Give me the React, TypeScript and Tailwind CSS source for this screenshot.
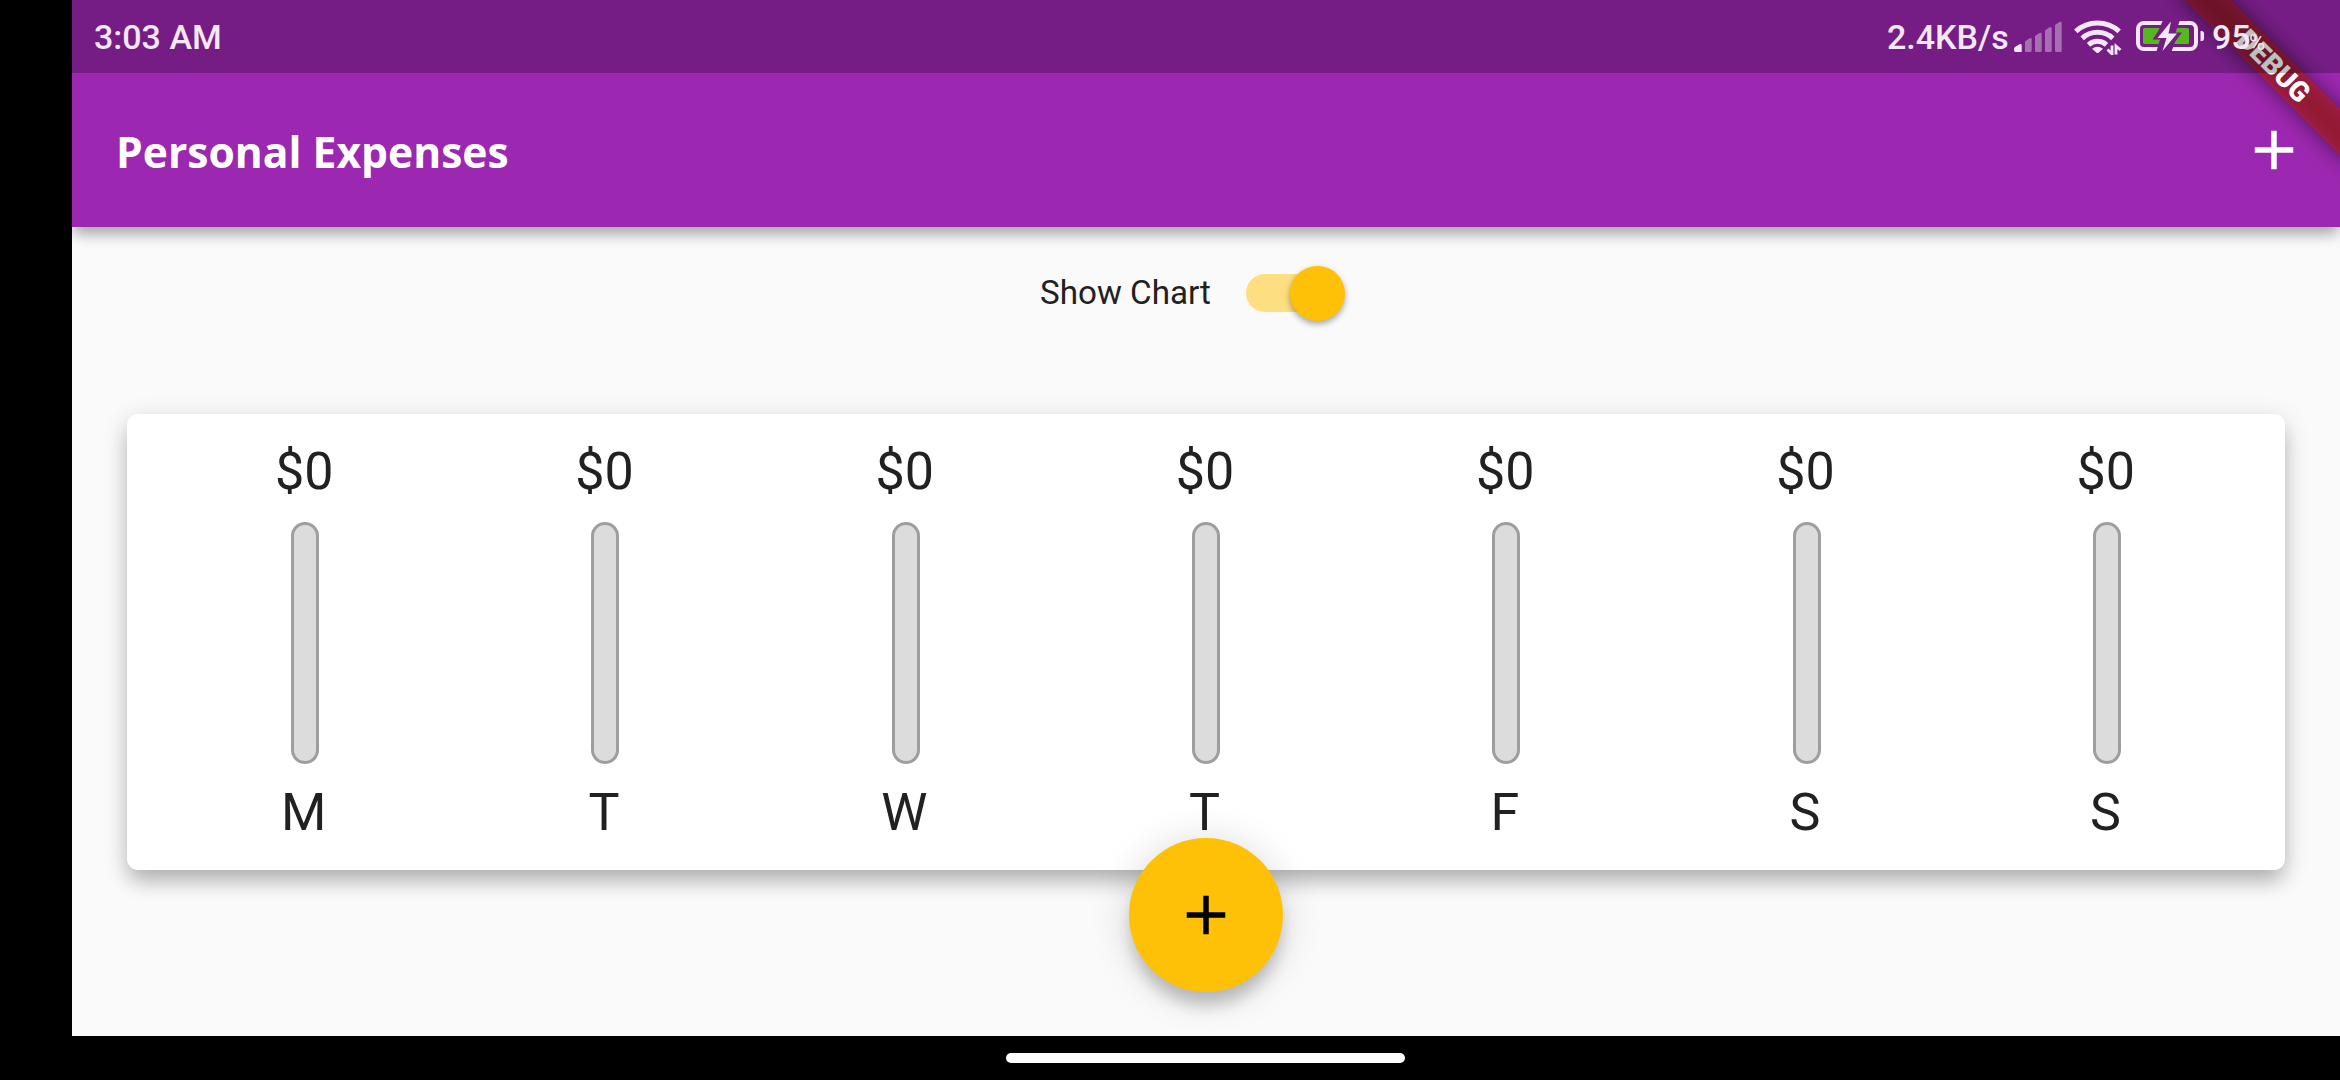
const days = ["M", "T", "W", "T", "F", "S", "S"];

function Plus({ size, color }: { size: number; color: string }) {
  return (
    <svg width={size} height={size} viewBox="0 0 24 24" fill={color}>
      <path d="M19 13h-6v6h-2v-6H5v-2h6V5h2v6h6v2z" />
    </svg>
  );
}

function Signal() {
  return (
    <svg width="48" height="32" viewBox="0 0 48 32" fill="#f3e8f5">
      <path d="M0 29V27.500Q0 26.500 1 26L5.500 23.200Q7.700 22.500 7.700 24.500V31H1.500Q0 31 0 29Z" />
      <g opacity="0.4">
        <path d="M11 20.500L15.500 17.300Q17.700 16.500 17.700 18.500V29.500Q17.700 31 16.500 31H12.500Q11 31 11 29.500Z" />
        <path d="M21 15L25.500 12Q27.700 11 27.700 13V29.500Q27.700 31 26.500 31H22.500Q21 31 21 29.500Z" />
        <path d="M31 9.500L35.500 6.300Q37.700 5.300 37.700 7.500V29.500Q37.700 31 36.500 31H32.500Q31 31 31 29.500Z" />
        <path d="M41 4L45.500 1Q47.700 0 47.700 2V29.500Q47.700 31 46.500 31H42.500Q41 31 41 29.500Z" />
      </g>
    </svg>
  );
}

function Wifi() {
  return (
    <svg width="48" height="36" viewBox="0 0 48 36" fill="none" stroke="#f3e8f5" strokeWidth="5">
      <path d="M1.800 12.300A32.500 32.500 0 0 1 45.200 12.300" />
      <path d="M8.200 19.300A22.500 22.500 0 0 1 38.800 19.300" />
      <path d="M14.500 25.800A13.500 13.500 0 0 1 32.500 25.800" />
      <path d="M18 29.800Q23.500 25.500 29 29.800L24.500 33.700Q23.500 34.500 22.500 33.700Z" fill="#f3e8f5" stroke="none" />
      <path d="M38 26.500V35L33.500 30.500M42 35.500V27L46.500 31" strokeWidth="2.800" />
    </svg>
  );
}

function Battery() {
  return (
    <svg width="70" height="32" viewBox="0 0 70 32">
      <rect x="2" y="2" width="58" height="26" rx="6" fill="none" stroke="#f3e8f5" strokeWidth="4" />
      <rect x="7" y="7" width="46" height="16" rx="1.500" fill="#56b81f" />
      <path d="M64.500 10h1q2.500 0 2.500 2.500v5q0 2.500-2.500 2.500h-1z" fill="#f3e8f5" />
      <path d="M27 -1L22 10.500L16.500 18.500H24L20 32H35L39 21L46 11.500H39.500L44 -1Z" fill="#751d84" />
      <path d="M35 0.500L21.500 17H30.500L26.500 30L41 12.500H32.500Z" fill="#f3e8f5" />
    </svg>
  );
}

function DebugBanner() {
  return (
    <div className="absolute top-0 right-0 z-20 h-0 w-0 rotate-45">
      <div className="absolute top-[77px] left-[-120px] h-[33px] w-[240px] bg-black/50 blur-[10px]" />
      <div className="absolute top-[77px] left-[-120px] flex h-[33px] w-[240px] items-center justify-center bg-[#b71c1c]/63 text-[28px] leading-none font-black text-white">
        DEBUG
      </div>
    </div>
  );
}

function StatusBar() {
  return (
    <div className="absolute inset-x-0 top-0 z-20 flex h-[73px] items-center bg-black/25 pl-[22px] text-[34px] font-medium text-[#f3e8f5]">
      <span className="mt-0.5">3:03 AM</span>
      <div className="ml-auto flex w-[453px] shrink-0 items-center whitespace-nowrap">
        <span className="mt-0.5 w-[127px]">2.4KB/s</span>
        <Signal />
        <div className="ml-3">
          <Wifi />
        </div>
        <div className="ml-[14px]">
          <Battery />
        </div>
        <span className="mt-0.5 ml-1.5 w-[37px]">95</span>
        <span className="mt-[11px] text-[22px] font-normal">%</span>
      </div>
    </div>
  );
}

function DayBar({ label }: { label: string }) {
  return (
    <div className="flex flex-1 flex-col items-center text-[52px] leading-[60px]">
      <span className="mr-0.5">$0</span>
      <div className="mt-5 mb-[19px] h-[242px] w-[28px] rounded-full border-[3px] border-[#9e9e9e] bg-[#dcdcdc]" />
      <span className="mr-[3px]">{label}</span>
    </div>
  );
}

export default function App() {
  return (
    <div className="flex h-[1080px] w-[2340px] flex-col overflow-hidden bg-black pl-[72px] font-[Roboto,sans-serif] text-[#212121]">
      <div className="relative flex h-[1036px] flex-col overflow-hidden bg-[#fafafa]">
        <header className="z-10 flex h-[227px] shrink-0 items-center justify-between bg-[#9c27b0] pt-[73px] pr-[33px] pl-[44px] shadow-[0_11px_14px_-3px_rgba(0,0,0,0.2),0_4px_14px_rgba(0,0,0,0.2)]">
          <h1 className="mt-1 font-['Open_Sans',sans-serif] text-[42.6px] font-bold text-white">Personal Expenses</h1>
          <Plus size={66} color="#fff" />
        </header>

        <div className="flex h-[132px] items-center pl-[968px] text-[33.2px]">
          <span className="w-[171px] whitespace-nowrap">Show Chart</span>
          <div className="relative ml-[35px] h-[38.5px] w-[91px] rounded-full bg-[#ffc107]/50">
            <div className="absolute -top-2 left-[44px] size-[55px] rounded-full bg-[#ffc107] shadow-[0_3px_6px_rgba(0,0,0,0.35)]" />
          </div>
        </div>

        <section className="mx-[55px] mt-[55px] flex h-[456px] rounded-[11px] bg-white px-[28px] pt-[28px] shadow-[0_14px_20px_-3px_rgba(0,0,0,0.2),0_6px_26px_rgba(0,0,0,0.16)]">
          {days.map((day, i) => (
            <DayBar key={i} label={day} />
          ))}
        </section>

        <button className="absolute top-[838px] left-[1057px] flex size-[154px] items-center justify-center rounded-full bg-[#ffc107] shadow-[0_16px_16px_-3px_rgba(0,0,0,0.2),0_4px_40px_rgba(0,0,0,0.16)]">
          <Plus size={66} color="#000" />
        </button>

        <DebugBanner />
        <StatusBar />
      </div>
      <footer className="flex h-[44px] items-center justify-center pr-px">
        <div className="h-[10px] w-[399px] rounded-full bg-white" />
      </footer>
    </div>
  );
}
